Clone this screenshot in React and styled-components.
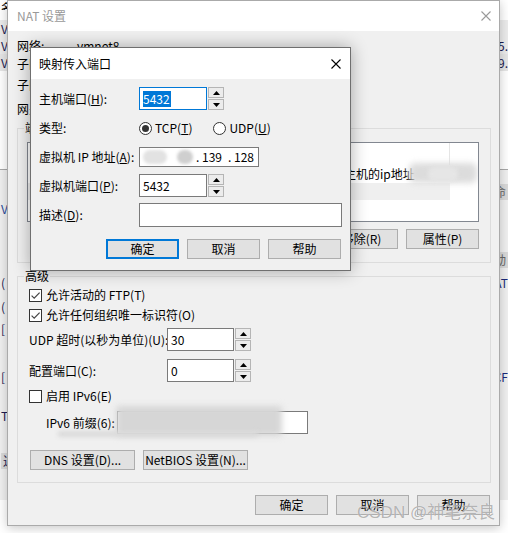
import React from "react";
import styled, { createGlobalStyle } from "styled-components";

const Global = createGlobalStyle`
  html, body { margin: 0; padding: 0; background: #ffffff; }
  body { width: 508px; height: 533px; overflow: hidden; }
  * { box-sizing: border-box; }
`;

const Desktop = styled.div`
  position: relative;
  width: 508px;
  height: 533px;
  overflow: hidden;
  background: #ffffff;
  font-family: "Noto Sans CJK SC", "Noto Sans", sans-serif;
  font-size: 12px;
  line-height: 16px;
  color: #000;
`;

/* ---------- background window (only its edges show) ---------- */
const BgWindow = styled.div`
  position: absolute;
  left: 0;
  top: 0;
  width: 508px;
  height: 500px;
  display: flex;
  flex-direction: column;
  background: #ffffff;
`;
const BgRow = styled.div`
  flex: none;
  height: ${(p) => p.$h || 16}px;
  margin-top: ${(p) => p.$mt || 0}px;
  display: flex;
  justify-content: space-between;
  align-items: ${(p) => (p.$top ? "flex-start" : "center")};
  padding: 0 0 0 1px;
  overflow: hidden;
  background: ${(p) => p.$bg || "transparent"};
  color: ${(p) => p.$color || "#1b1b50"};
  border-bottom: ${(p) => (p.$line ? "1px solid #a8a8a8" : "none")};
`;
const BgGlyph = styled.span`
  padding: ${(p) => (p.$box ? "0 2px" : "0")};
  background: ${(p) => (p.$box ? "#d9d9d9" : "transparent")};
  color: ${(p) => p.$color || "inherit"};
`;
const BgLower = styled.div`
  flex: 1;
  display: flex;
  flex-direction: column;
  background: #f0f0f0;
`;

/* ---------- windows ---------- */
const NatWindow = styled.div`
  position: absolute;
  left: 7px;
  top: 0;
  width: 493px;
  height: 526px;
  border: 1px solid #aaaaaa;
  background: #f0f0f0;
  box-shadow: 0 2px 10px rgba(0, 0, 0, 0.22);
  display: flex;
  flex-direction: column;
`;
const MapDialog = styled.div`
  position: absolute;
  left: 30px;
  top: 47px;
  width: 321px;
  height: 224px;
  border: 1px solid #6f6f6f;
  background: #f0f0f0;
  box-shadow: 0 0 16px rgba(0, 0, 0, 0.32);
  display: flex;
  flex-direction: column;
`;
const TitleBar = styled.div`
  flex: none;
  height: ${(p) => p.$h}px;
  background: #ffffff;
  display: flex;
  align-items: center;
  justify-content: space-between;
  padding: 0 ${(p) => p.$pr}px 0 ${(p) => p.$pl}px;
`;
const TitleText = styled.span`
  color: ${(p) => (p.$dim ? "#999999" : "#000000")};
`;

const CloseIcon = ({ color }) => (
  <svg width="10" height="10" viewBox="0 0 10 10">
    <path d="M0.5 0.5 L9.5 9.5 M9.5 0.5 L0.5 9.5" stroke={color} strokeWidth="1.1" />
  </svg>
);

/* ---------- NAT body ---------- */
const NatBody = styled.div`
  flex: 1;
  display: flex;
  flex-direction: column;
  padding: 6px 8px 0 9px;
`;
const InfoRow = styled.div`
  flex: none;
  height: ${(p) => p.$h}px;
  display: flex;
  align-items: center;
`;
const InfoLabel = styled.span`
  width: 60px;
  flex: none;
  white-space: nowrap;
`;

const Group = styled.fieldset`
  margin: ${(p) => p.$mt || 0}px 0 0 0;
  padding: 0;
  border: 1px solid #dcdcdc;
  min-width: 0;
`;
const Legend = styled.legend`
  margin-left: 6px;
  padding: 0 1px;
  height: 16px;
  line-height: 16px;
`;
const GroupBody = styled.div`
  display: flex;
  flex-direction: column;
  padding: ${(p) => p.$pad};
`;

const ListBox = styled.div`
  height: 80px;
  border: 1px solid #828790;
  background: #ffffff;
  display: flex;
  flex-direction: column;
  overflow: hidden;
  position: relative;
`;
const ListGrid = styled.div`
  display: grid;
  grid-template-columns: 68px 60px 184px 110px 1fr;
  height: ${(p) => p.$h}px;
`;
const HeadCell = styled.div`
  border-right: 1px solid #e5e5e5;
  padding-left: 4px;
  display: flex;
  align-items: center;
  color: #333;
  white-space: nowrap;
  overflow: hidden;
`;
const Cell = styled.div`
  padding-left: 4px;
  display: flex;
  align-items: center;
  white-space: nowrap;
  overflow: hidden;
  background: ${(p) => p.$bg || "transparent"};
`;
const Blob = styled.span`
  position: absolute;
  left: ${(p) => p.$x}px;
  top: ${(p) => p.$y}px;
  width: ${(p) => p.$w}px;
  height: ${(p) => p.$hh}px;
  background: ${(p) => p.$c};
  border-radius: ${(p) => p.$r || 6}px;
  filter: blur(${(p) => p.$b || 2}px);
`;

const ButtonRow = styled.div`
  display: flex;
  justify-content: ${(p) => p.$justify || "flex-end"};
  gap: ${(p) => p.$gap || 8}px;
  margin-top: ${(p) => p.$mt || 0}px;
  padding-right: ${(p) => p.$pr || 0}px;
  padding-left: ${(p) => p.$pl || 0}px;
`;
const Button = styled.div`
  flex: none;
  width: ${(p) => p.$w || 73}px;
  height: 20px;
  background: #e1e1e1;
  border: ${(p) => (p.$default ? "2px solid #0078d7" : "1px solid #adadad")};
  display: flex;
  align-items: center;
  justify-content: center;
  white-space: nowrap;
`;

const CheckRow = styled.div`
  height: 16px;
  margin-top: ${(p) => p.$mt || 0}px;
  display: flex;
  align-items: center;
  gap: 4px;
`;
const CheckBox = styled.span`
  width: 13px;
  height: 13px;
  flex: none;
  border: 1px solid #333333;
  background: #ffffff;
  display: flex;
  align-items: center;
  justify-content: center;
`;
const Check = () => (
  <svg width="11" height="11" viewBox="0 0 11 11">
    <path d="M1.6 5.6 L4.2 8.2 L9.6 2.6" stroke="#444" strokeWidth="1.2" fill="none" />
  </svg>
);

const FieldRow = styled.div`
  display: flex;
  align-items: center;
  height: ${(p) => p.$h}px;
  margin-top: ${(p) => p.$mt || 0}px;
  padding-left: ${(p) => p.$indent || 0}px;
`;
const FieldLabel = styled.span`
  width: ${(p) => p.$w}px;
  flex: none;
  white-space: nowrap;
`;
const TextBox = styled.div`
  position: relative;
  width: ${(p) => p.$w}px;
  height: 100%;
  flex: none;
  background: #ffffff;
  border: 1px solid ${(p) => (p.$focus ? "#0078d7" : "#7a7a7a")};
  display: flex;
  align-items: center;
  padding-left: 3px;
  white-space: nowrap;
`;
const Selected = styled.span`
  background: #0078d7;
  color: #ffffff;
  padding-right: 1px;
`;
const SpinCol = styled.div`
  width: 17px;
  height: 100%;
  flex: none;
  display: flex;
  flex-direction: column;
  gap: 1px;
  padding: 0 0 0 1px;
`;
const SpinBtn = styled.div`
  flex: 1;
  background: #ececec;
  border: 1px solid #b5b5b5;
  display: flex;
  align-items: center;
  justify-content: center;
`;
const Tri = ({ up }) => (
  <svg width="7" height="4" viewBox="0 0 7 4">
    <path d={up ? "M0 4 L3.5 0 L7 4Z" : "M0 0 L3.5 4 L7 0Z"} fill="#000" />
  </svg>
);
const Spin = () => (
  <SpinCol>
    <SpinBtn><Tri up /></SpinBtn>
    <SpinBtn><Tri /></SpinBtn>
  </SpinCol>
);

/* ---------- map dialog ---------- */
const MapBody = styled.div`
  flex: 1;
  display: flex;
  flex-direction: column;
  padding: 8px 9px 0 8px;
`;
const Mn = styled.span`
  text-decoration: underline;
  text-underline-offset: 1px;
`;
const RadioGroup = styled.div`
  display: flex;
  align-items: center;
  gap: 21px;
`;
const RadioItem = styled.span`
  display: flex;
  align-items: center;
  gap: 3px;
`;
const RadioCircle = styled.span`
  width: 13px;
  height: 13px;
  border-radius: 50%;
  border: 1px solid #333333;
  background: #ffffff;
  display: flex;
  align-items: center;
  justify-content: center;
  &::after {
    content: "";
    width: 7px;
    height: 7px;
    border-radius: 50%;
    background: ${(p) => (p.$on ? "#333333" : "transparent")};
  }
`;
const IpPart = styled.span`
  margin-left: ${(p) => p.$ml || 0}px;
`;
const InlineBlob = styled.span`
  flex: none;
  width: ${(p) => p.$w}px;
  height: 14px;
  margin-left: ${(p) => p.$ml || 0}px;
  background: ${(p) => p.$c};
  border-radius: 7px;
  filter: blur(1.5px);
`;

const Watermark = styled.div`
  position: absolute;
  left: 357px;
  top: 503px;
  font-family: "Liberation Sans", "Noto Sans CJK SC", sans-serif;
  font-size: 17px;
  line-height: 20px;
  color: rgba(120, 120, 120, 0.55);
  text-shadow: 0 0 1px rgba(255, 255, 255, 0.9);
  white-space: nowrap;
`;

export default function App() {
  return (
    <>
      <Global />
      <Desktop>
        <BgWindow>
          <BgRow $h={10} $top><BgGlyph $color="#000">名</BgGlyph><span /></BgRow>
          <BgRow $h={10}><span /><span /></BgRow>
          <BgRow $h={17} $bg="#ececec"><BgGlyph>V</BgGlyph><span /></BgRow>
          <BgRow $h={17} $bg="#ececec"><BgGlyph>V</BgGlyph><BgGlyph>5.</BgGlyph></BgRow>
          <BgRow $h={17} $bg="#e6e6e6"><BgGlyph>V</BgGlyph><BgGlyph>9.</BgGlyph></BgRow>
          <BgRow $h={99} $line><span /><span /></BgRow>
          <BgLower>
            <BgRow $mt={14}><span /><BgGlyph $box $color="#666">命</BgGlyph></BgRow>
            <BgRow $mt={1}><BgGlyph $color="#2a4a9a">V</BgGlyph><span /></BgRow>
            <BgRow $mt={35}><span /><BgGlyph $box $color="#666">动</BgGlyph></BgRow>
            <BgRow $mt={7}><BgGlyph>(</BgGlyph><BgGlyph $color="#1b2a7a">AT</BgGlyph></BgRow>
            <BgRow $mt={8}><BgGlyph>(</BgGlyph><span /></BgRow>
            <BgRow $mt={6}><BgGlyph>[</BgGlyph><span /></BgRow>
            <BgRow $mt={32}><BgGlyph>[</BgGlyph><BgGlyph $color="#1b2a7a">CF</BgGlyph></BgRow>
            <BgRow $mt={23}><BgGlyph>T</BgGlyph><span /></BgRow>
            <BgRow $mt={29}><BgGlyph $box>过</BgGlyph><span /></BgRow>
          </BgLower>
        </BgWindow>

        <NatWindow>
          <TitleBar $h={30} $pl={9} $pr={8}>
            <TitleText $dim>NAT 设置</TitleText>
            <CloseIcon color="#9a9a9a" />
          </TitleBar>
          <NatBody>
            <InfoRow $h={18}><InfoLabel>网络:</InfoLabel><span>vmnet8</span></InfoRow>
            <InfoRow $h={18}><InfoLabel>子网 IP:</InfoLabel><span>192.168.139.0</span></InfoRow>
            <InfoRow $h={24}><InfoLabel>子网掩码:</InfoLabel><span>255.255.255.0</span></InfoRow>
            <InfoRow $h={23}><InfoLabel>网关 IP(G):</InfoLabel><span>192.168.139.2</span></InfoRow>

            <Group>
              <Legend>端口转发(F)</Legend>
              <GroupBody $pad="6px 11px 13px 9px">
                <ListBox>
                  <ListGrid $h={22}>
                    <HeadCell>主机端口</HeadCell>
                    <HeadCell>类型</HeadCell>
                    <HeadCell>虚拟机 IP 地址</HeadCell>
                    <HeadCell />
                    <span />
                  </ListGrid>
                  <ListGrid $h={18}>
                    <Cell>5432</Cell>
                    <Cell>TCP</Cell>
                    <Cell>192.168.139.128:5432</Cell>
                    <Cell>主机的ip地址</Cell>
                    <span />
                  </ListGrid>
                  <ListGrid $h={17}>
                    <Cell $bg="#efefef" />
                    <Cell $bg="#efefef" />
                    <Cell $bg="#efefef" />
                    <Cell $bg="#efefef" />
                    <span />
                  </ListGrid>
                  <Blob $x={381} $y={20} $w={68} $hh={20} $c="#dcdcdc" $b={3} />
                  <Blob $x={400} $y={24} $w={30} $hh={14} $c="#e6e6e6" $b={2} />
                </ListBox>
                <ButtonRow $mt={7}>
                  <Button>添加(A)...</Button>
                  <Button>移除(R)</Button>
                  <Button>属性(P)</Button>
                </ButtonRow>
              </GroupBody>
            </Group>

            <Group $mt={5}>
              <Legend>高级</Legend>
              <GroupBody $pad="3px 11px 12px 11px">
                <CheckRow><CheckBox><Check /></CheckBox><span>允许活动的 FTP(T)</span></CheckRow>
                <CheckRow $mt={4}><CheckBox><Check /></CheckBox><span>允许任何组织唯一标识符(O)</span></CheckRow>
                <FieldRow $h={23} $mt={5}>
                  <FieldLabel $w={138}>UDP 超时(以秒为单位)(U):</FieldLabel>
                  <TextBox $w={67}>30</TextBox>
                  <Spin />
                </FieldRow>
                <FieldRow $h={23} $mt={8}>
                  <FieldLabel $w={138}>配置端口(C):</FieldLabel>
                  <TextBox $w={67}>0</TextBox>
                  <Spin />
                </FieldRow>
                <CheckRow $mt={6}><CheckBox /><span>启用 IPv6(E)</span></CheckRow>
                <FieldRow $h={23} $mt={7} $indent={17}>
                  <FieldLabel $w={71}>IPv6 前缀(6):</FieldLabel>
                  <TextBox $w={191}>
                    <Blob $x={-2} $y={-6} $w={166} $hh={30} $c="#d6d6d6" $b={3} $r={3} />
                    <Blob $x={-60} $y={19} $w={200} $hh={6} $c="#dadada" $b={2} $r={2} />
                  </TextBox>
                </FieldRow>
                <ButtonRow $mt={16} $justify="flex-start" $pl={1} $gap={8}>
                  <Button $w={105}>DNS 设置(D)...</Button>
                  <Button $w={105}>NetBIOS 设置(N)...</Button>
                </ButtonRow>
              </GroupBody>
            </Group>

            <ButtonRow $mt={12} $pr={1}>
              <Button>确定</Button>
              <Button>取消</Button>
              <Button>帮助</Button>
            </ButtonRow>
          </NatBody>
        </NatWindow>

        <MapDialog>
          <TitleBar $h={31} $pl={8} $pr={9}>
            <TitleText>映射传入端口</TitleText>
            <CloseIcon color="#000000" />
          </TitleBar>
          <MapBody>
            <FieldRow $h={23}>
              <FieldLabel $w={100}>主机端口(<Mn>H</Mn>):</FieldLabel>
              <TextBox $w={68} $focus><Selected>5432</Selected></TextBox>
              <Spin />
            </FieldRow>
            <FieldRow $h={16} $mt={10}>
              <FieldLabel $w={100}>类型:</FieldLabel>
              <RadioGroup>
                <RadioItem><RadioCircle $on /><span>TCP(<Mn>T</Mn>)</span></RadioItem>
                <RadioItem><RadioCircle /><span>UDP(<Mn>U</Mn>)</span></RadioItem>
              </RadioGroup>
            </FieldRow>
            <FieldRow $h={20} $mt={11}>
              <FieldLabel $w={100}>虚拟机 IP 地址(<Mn>A</Mn>):</FieldLabel>
              <TextBox $w={120}>
                <InlineBlob $w={24} $c="#e2e2e2" />
                <InlineBlob $w={16} $ml={10} $c="#cfcfcf" />
                <IpPart $ml={3}>. 139</IpPart>
                <IpPart $ml={6}>. 128</IpPart>
              </TextBox>
            </FieldRow>
            <FieldRow $h={23} $mt={7}>
              <FieldLabel $w={100}>虚拟机端口(<Mn>P</Mn>):</FieldLabel>
              <TextBox $w={68}>5432</TextBox>
              <Spin />
            </FieldRow>
            <FieldRow $h={24} $mt={6}>
              <FieldLabel $w={100}>描述(<Mn>D</Mn>):</FieldLabel>
              <TextBox $w={203} />
            </FieldRow>
            <ButtonRow $mt={12}>
              <Button $default>确定</Button>
              <Button>取消</Button>
              <Button>帮助</Button>
            </ButtonRow>
          </MapBody>
        </MapDialog>

        <Watermark>CSDN @神笔奈良</Watermark>
      </Desktop>
    </>
  );
}
